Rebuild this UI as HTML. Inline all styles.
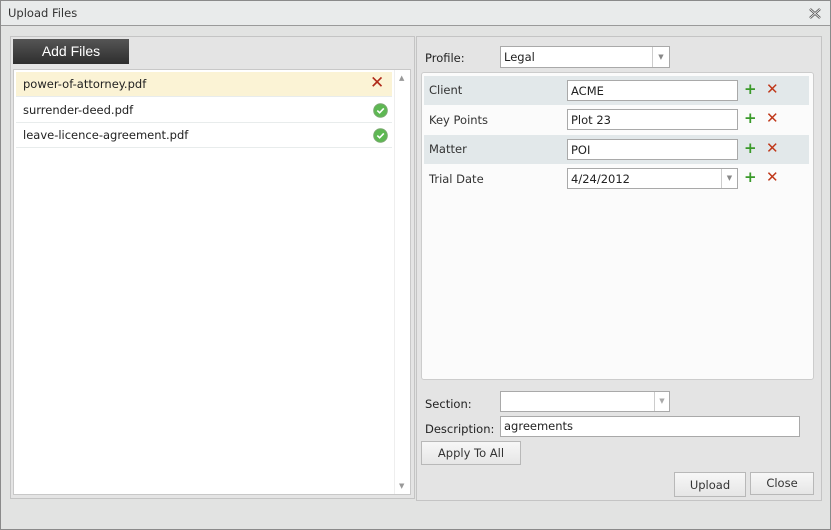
<!DOCTYPE html>
<html><head><style>
*{box-sizing:border-box;margin:0;padding:0}
body{width:831px;height:530px;background:#e2e3e2;font-family:"DejaVu Sans","Liberation Sans",sans-serif;font-size:11.5px;color:#222;position:relative;overflow:hidden}
.a{position:absolute}
.title{left:0;top:0;width:831px;height:26px;background:#e9ebeb;border-bottom:1px solid #9a9a9a}
.inp{background:#fff;border:1px solid #a9a9a9;padding:3px 3px;font-size:11.5px}
.btn{background:linear-gradient(#f7f7f7,#e6e6e6);border:1px solid #b8b8b8;text-align:center;color:#333;font-size:11.5px}
.row{left:2px;width:385px;height:29px}
.row span{position:absolute;left:5px;top:7px;color:#333}
.plus{color:#3a9a2a;font-weight:bold;font-size:15px}
.x{color:#c0391b;font-size:15px}
.file{left:2px;width:376px;height:25px;border-bottom:1px solid #e8ecec}
.file span{position:absolute;left:7px;top:5px}
.ok{width:14px;height:14px;border-radius:50%;background:radial-gradient(circle at 40% 35%,#b8e8a8,#4fa845);border:1px solid #7aa870}
</style></head><body>
<div class="a" style="left:0;top:0;width:831px;height:530px;border:1px solid #8a8a8a;z-index:5;pointer-events:none"></div>
<div class="a title"><span class="a" style="left:8px;top:6px;color:#333">Upload Files</span>
<svg class="a" style="left:809px;top:8px" width="12" height="11"><path d="M1 1L11 10M11 1L1 10" stroke="#555" stroke-width="2.5"/><path d="M1 1L11 10M11 1L1 10" stroke="#fff" stroke-width="0.8"/></svg></div>

<div class="a" style="left:10px;top:36px;width:405px;height:463px;border:1px solid #c4c4c4;background:#e4e4e4"></div>
<div class="a" style="left:13px;top:39px;width:116px;height:25px;background:linear-gradient(#555,#2e2e2e);color:#fff;font-family:'Liberation Sans',sans-serif;font-size:14px;text-align:center;line-height:25px">Add Files</div>
<div class="a" style="left:13px;top:69px;width:398px;height:426px;background:#fff;border:1px solid #c8c8c8">
 <div class="a file" style="top:2px;background:#fbf3d5"><span>power-of-attorney.pdf</span><span style="left:354px;top:1px;color:#b02a1a;font-size:17px;font-weight:bold">✕</span></div>
 <div class="a file" style="top:28px"><span>surrender-deed.pdf</span><svg class="a" style="left:357px;top:5px" width="15" height="15"><circle cx="7.5" cy="7.5" r="6.8" fill="#5db852" stroke="#7aa870"/><path d="M4.3 7.6L6.6 9.8L10.8 5.4" stroke="#fff" stroke-width="1.6" fill="none"/></svg></div>
 <div class="a file" style="top:53px"><span>leave-licence-agreement.pdf</span><svg class="a" style="left:357px;top:5px" width="15" height="15"><circle cx="7.5" cy="7.5" r="6.8" fill="#5db852" stroke="#7aa870"/><path d="M4.3 7.6L6.6 9.8L10.8 5.4" stroke="#fff" stroke-width="1.6" fill="none"/></svg></div>
 <div class="a" style="left:380px;top:0;width:16px;height:424px;border-left:1px solid #eee"><span class="a" style="left:4px;top:4px;font-size:7px;color:#999">▲</span><span class="a" style="left:4px;bottom:4px;font-size:7px;color:#999">▼</span></div>
</div>

<div class="a" style="left:416px;top:36px;width:406px;height:465px;border:1px solid #c4c4c4;background:#e4e4e4"></div>
<span class="a" style="left:425px;top:51px">Profile:</span>
<div class="a inp" style="left:500px;top:46px;width:170px;height:22px">Legal<span class="a" style="right:0;top:0;width:17px;height:20px;border-left:1px solid #ccc;font-size:7px;color:#888;text-align:center;line-height:20px">▼</span></div>
<div class="a" style="left:421px;top:72px;width:393px;height:308px;background:#fbfbfb;border:1px solid #ccc;border-radius:3px">
 <div class="a row" style="top:3px;background:#e2e8ea"><span>Client</span></div>
 <div class="a row" style="top:33px"><span>Key Points</span></div>
 <div class="a row" style="top:62px;background:#e2e8ea"><span>Matter</span></div>
 <div class="a row" style="top:92px"><span>Trial Date</span></div>
</div>
<div class="a inp" style="left:567px;top:80px;width:171px;height:21px">ACME</div>
<div class="a inp" style="left:567px;top:109px;width:171px;height:21px">Plot 23</div>
<div class="a inp" style="left:567px;top:139px;width:171px;height:21px">POI</div>
<div class="a inp" style="left:567px;top:168px;width:171px;height:21px">4/24/2012<span class="a" style="right:0;top:0;width:16px;height:19px;border-left:1px solid #ccc;font-size:7px;color:#888;text-align:center;line-height:19px">▼</span></div>
<span class="a plus" style="left:744px;top:80px">+</span><span class="a x" style="left:766px;top:80px">✕</span>
<span class="a plus" style="left:744px;top:109px">+</span><span class="a x" style="left:766px;top:109px">✕</span>
<span class="a plus" style="left:744px;top:139px">+</span><span class="a x" style="left:766px;top:139px">✕</span>
<span class="a plus" style="left:744px;top:168px">+</span><span class="a x" style="left:766px;top:168px">✕</span>

<span class="a" style="left:425px;top:397px">Section:</span>
<div class="a inp" style="left:500px;top:391px;width:170px;height:21px"><span class="a" style="right:0;top:0;width:15px;height:19px;border-left:1px solid #ccc;font-size:7px;color:#aaa;text-align:center;line-height:19px">▼</span></div>
<span class="a" style="left:425px;top:422px">Description:</span>
<div class="a inp" style="left:500px;top:416px;width:300px;height:21px;padding-top:2px">agreements</div>
<div class="a btn" style="left:421px;top:441px;width:100px;height:24px;line-height:22px">Apply To All</div>
<div class="a btn" style="left:674px;top:472px;width:72px;height:25px;line-height:25px">Upload</div>
<div class="a btn" style="left:750px;top:472px;width:64px;height:23px;line-height:21px">Close</div>
</body></html>
